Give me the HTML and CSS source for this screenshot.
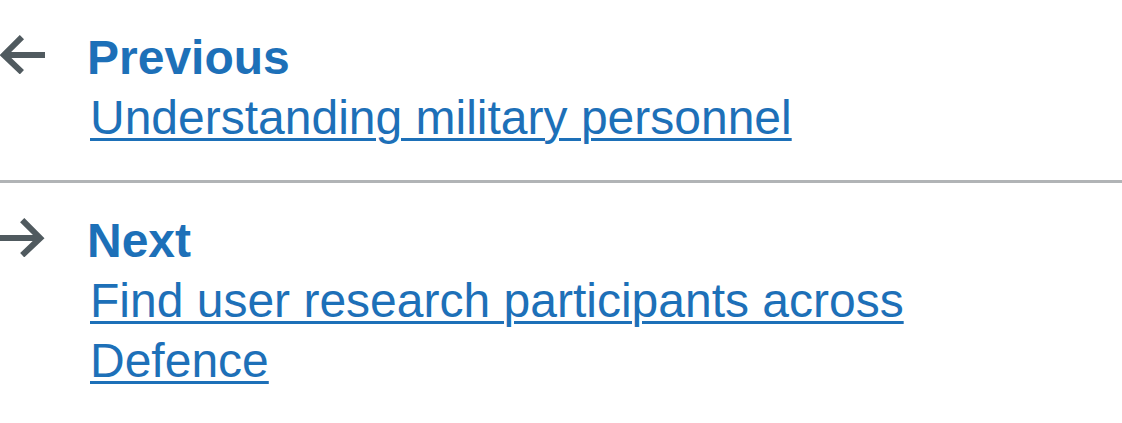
FILE: index.html
```html
<!DOCTYPE html>
<html lang="en">
<head>
<meta charset="utf-8">
<title>Pagination</title>
<link rel="stylesheet" href="styles.css">
</head>
<body>
<nav class="pagination" aria-label="Pagination">
  <div class="item item-prev">
    <a class="link" href="#">
      <span class="title"><svg class="icon" width="45" height="39" viewBox="0 0 15 13" aria-hidden="true"><path fill="currentColor" d="m6.5938-0.0078125-6.7266 6.7266 6.7441 6.4062 1.377-1.449-4.1856-3.9758h12.896v-2h-12.984l4.2931-4.293-1.414-1.414z"/></svg><span class="title-text">Previous</span></span>
      <span class="label-wrap"><span class="label">Understanding military personnel</span></span>
    </a>
  </div>
  <div class="item item-next">
    <a class="link" href="#">
      <span class="title"><svg class="icon" width="45" height="39" viewBox="0 0 15 13" aria-hidden="true"><path fill="currentColor" d="m8.107-0.0078125-1.4136 1.414 4.2926 4.293h-12.986v2h12.896l-4.1855 3.9766 1.377 1.4492 6.7441-6.4062-6.7246-6.7266z"/></svg><span class="title-text">Next</span></span>
      <span class="label-wrap"><span class="label">Find user research participants across Defence</span></span>
    </a>
  </div>
</nav>
</body>
</html>
```
FILE: styles.css
```css
html, body {
  margin: 0;
  padding: 0;
  background: #ffffff;
}

body {
  font-family: "Liberation Sans", Arial, sans-serif;
  font-size: 48px;
  line-height: 60px;
  color: #0b0c0c;
}

.pagination {
  display: block;
}

.item {
  padding: 28px 0 32px;
}

.item-next {
  border-top: 3px solid #b1b4b6;
  padding-top: 28px;
}

.link {
  display: block;
  color: #1d70b8;
  text-decoration: none;
}

.title {
  display: block;
  font-weight: 700;
}

.icon {
  color: #505a5f;
  margin-right: 42px;
  vertical-align: baseline;
}

.label-wrap {
  display: block;
  padding-left: 90px;
  max-width: 900px;
}

.label {
  text-decoration: underline;
  text-decoration-thickness: 3px;
  text-underline-offset: 4px;
}
```
